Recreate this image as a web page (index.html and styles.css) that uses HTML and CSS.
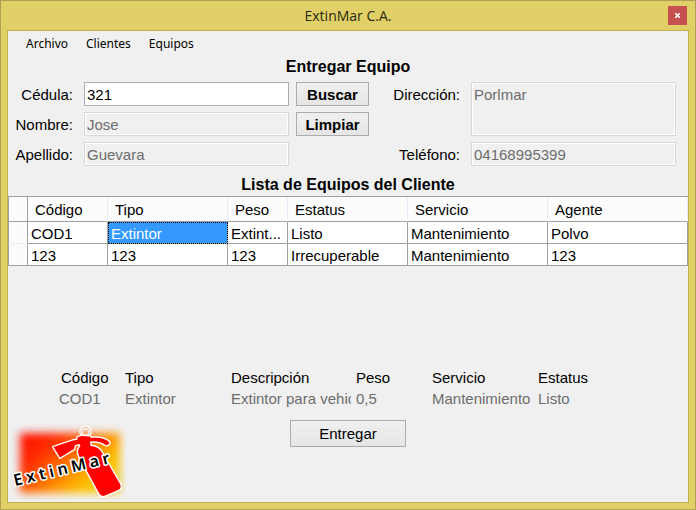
FILE: index.html
```html
<!DOCTYPE html>
<html lang="es">
<head>
<meta charset="utf-8">
<title>ExtinMar C.A.</title>
<link rel="stylesheet" href="styles.css">
</head>
<body>
<div class="window">
  <header class="titlebar">
    <h1 class="title">ExtinMar C.A.</h1>
    <button class="close" type="button" aria-label="Cerrar">
      <svg width="7" height="7" viewBox="0 0 7 7" aria-hidden="true"><path d="M1.2 1.2 5.8 5.8M5.8 1.2 1.2 5.8" stroke="#fff" stroke-width="1.6"/></svg>
    </button>
  </header>
  <main class="client">
    <nav class="menu">
      <a href="#archivo">Archivo</a>
      <a href="#clientes">Clientes</a>
      <a href="#equipos">Equipos</a>
    </nav>
    <h2 class="heading">Entregar Equipo</h2>
    <form class="form">
      <label for="cedula">Cédula:</label>
      <input id="cedula" type="text" value="321">
      <button class="btn strong" type="button">Buscar</button>
      <label for="direccion">Dirección:</label>
      <textarea id="direccion" class="address" disabled>Porlmar</textarea>
      <label for="nombre">Nombre:</label>
      <input id="nombre" type="text" value="Jose" disabled>
      <button class="btn strong" type="button">Limpiar</button>
      <label class="row-start" for="apellido">Apellido:</label>
      <input id="apellido" type="text" value="Guevara" disabled>
      <label class="phone" for="telefono">Teléfono:</label>
      <input id="telefono" type="text" value="04168995399" disabled>
    </form>
    <h2 class="heading list-heading">Lista de Equipos del Cliente</h2>
    <table class="grid">
      <colgroup><col class="c-row"><col class="c-code"><col class="c-type"><col class="c-weight"><col class="c-type"><col class="c-wide"><col class="c-wide"></colgroup>
      <thead>
        <tr><td class="row-head"></td><th>Código</th><th>Tipo</th><th>Peso</th><th>Estatus</th><th>Servicio</th><th>Agente</th></tr>
      </thead>
      <tbody>
        <tr><td class="row-head"></td><td>COD1</td><td class="selected">Extintor</td><td>Extint...</td><td>Listo</td><td>Mantenimiento</td><td>Polvo</td></tr>
        <tr><td class="row-head"></td><td>123</td><td>123</td><td>123</td><td>Irrecuperable</td><td>Mantenimiento</td><td>123</td></tr>
      </tbody>
    </table>
    <section class="bottom">
      <dl class="detail">
        <div><dt class="code">Código</dt><dd>COD1</dd></div>
        <div><dt>Tipo</dt><dd>Extintor</dd></div>
        <div><dt>Descripción</dt><dd>Extintor para vehic</dd></div>
        <div><dt>Peso</dt><dd>0,5</dd></div>
        <div><dt>Servicio</dt><dd>Mantenimiento</dd></div>
        <div><dt>Estatus</dt><dd>Listo</dd></div>
      </dl>
      <div class="actions">
        <svg class="logo" width="116" height="76" viewBox="10 424 116 76" role="img" aria-label="ExtinMar">
          <defs>
            <linearGradient id="fire" gradientUnits="userSpaceOnUse" x1="32" y1="430" x2="94" y2="498">
              <stop offset="0" stop-color="#ff1400"/><stop offset=".25" stop-color="#ff2c00"/><stop offset=".6" stop-color="#ff8a00"/><stop offset=".85" stop-color="#fdc400"/><stop offset="1" stop-color="#f4c818"/>
            </linearGradient>
            <filter id="soft" x="-20%" y="-20%" width="140%" height="140%"><feGaussianBlur stdDeviation="4"/></filter>
          </defs>
          <rect x="20" y="433" width="100" height="60" fill="url(#fire)" filter="url(#soft)"/>
          <circle cx="85.500" cy="432" r="4.500" fill="none" stroke="#fff" stroke-width="3.500"/>
          <circle cx="85.500" cy="432" r="4.500" fill="none" stroke="#eca690" stroke-width="1"/>
          <path d="M53.500 447 73 440.500 77 440 78 437 82 436 90 436.500 91 438C99 437 108 439 109.500 443Q108.500 446 105 444.500C100 441 95 441 90 441.500L90.500 446C96 446 100 449 102 453L120 484Q122 488 118 490L105 495.500Q101 497 99 493L80 458Q76 450 80.500 446L79.500 444 75 445 74 449 60 457.500Z" fill="#f00" stroke="#fff" stroke-width="2.800" stroke-linejoin="round" paint-order="stroke"/>
          <text class="logo-text" transform="translate(15 486) rotate(-13.500)">ExtinMar</text>
        </svg>
        <button class="btn deliver" type="button">Entregar</button>
      </div>
    </section>
  </main>
</div>
</body>
</html>
```
FILE: styles.css
```css
* { box-sizing: border-box; }

body {
  margin: 0;
  font: 15px/20px "Liberation Sans", Arial, sans-serif;
  color: #000;
}

.window {
  display: flex;
  flex-direction: column;
  min-height: 100vh;
  padding: 0 6px 6px;
  border: 1px solid #ada04f;
  background: #e1d067;
}

.titlebar {
  display: grid;
  grid-template-columns: 1fr auto 1fr;
  height: 29px;
}

.title {
  grid-column: 2;
  margin: 0;
  font: 14px/30px "Open Sans", sans-serif;
  color: #2b2810;
}

.close {
  justify-self: end;
  display: grid;
  place-items: center;
  width: 19px;
  height: 19px;
  margin: 5px 2px 0 0;
  padding: 0;
  border: 0;
  background: #c75050;
}

.client {
  flex: 1;
  display: flex;
  flex-direction: column;
  border: 1px solid #c2b04f;
  background: #f0f0f0;
}

.menu {
  display: flex;
  gap: 18px;
  padding: 3px 18px;
  font: 12px/20px "Noto Sans", sans-serif;
}

.menu a {
  color: #000;
  text-decoration: none;
}

.heading {
  margin: 0;
  font-size: 16px;
  line-height: 20px;
  text-align: center;
}

.form {
  display: grid;
  grid-template-columns: 69px 1fr 73px 88px 1fr;
  grid-auto-rows: 24px;
  gap: 6px 7px;
  padding: 5px 12px 0 0;
}

.form label {
  padding-right: 4px;
  line-height: 26px;
  text-align: right;
}

.row-start { grid-column: 1; }
.phone { grid-column: 4; }

input, textarea {
  width: 100%;
  min-width: 0;
  height: 100%;
  margin: 0;
  padding: 1px 2px;
  border: 1px solid #abadb3;
  border-radius: 0;
  background: #fff;
  color: #000;
  font: inherit;
  resize: none;
}

textarea { padding-top: 2px; }

input:disabled, textarea:disabled {
  border-color: #d9d9d9;
  background: #f0f0f0;
  box-shadow: inset 0 0 0 1px #fff;
  color: #6d6d6d;
}

.address { grid-row: span 2; }

.btn {
  padding: 1px 0 0;
  border: 1px solid #acacac;
  background: linear-gradient(#f0f0f0, #e5e5e5);
  color: #000;
  font: inherit;
}

.strong { font-weight: bold; }

.list-heading { margin: 9px 0 1px; }

.grid {
  width: 100%;
  table-layout: fixed;
  border-spacing: 0;
  border-top: 1px solid #a0a0a0;
  background: #fff;
}

.c-row { width: 20px; }
.c-code { width: 80px; }
.c-type { width: 120px; }
.c-weight { width: 60px; }
.c-wide { width: 140px; }

.grid th, .grid td {
  height: 22px;
  padding: 2px 3px 0;
  border: solid #a0a0a0;
  border-width: 0 1px 1px 0;
  line-height: 19px;
  text-align: left;
  font-weight: normal;
  white-space: nowrap;
}

.grid th {
  height: 25px;
  padding: 1px 7px 0;
  border-right-color: #e5effa;
  background: #fcfcfc;
}

.grid .row-head {
  border-left: 1px solid #a0a0a0;
  border-bottom-color: #e5effa;
  background: #fcfcfc;
}

.grid thead .row-head,
.grid tr:last-child .row-head { border-bottom-color: #a0a0a0; }

.grid .selected {
  background: #3399ff;
  color: #fff;
  outline: 1px dotted #000;
  outline-offset: -1px;
}

.bottom { margin-top: auto; }

.detail {
  display: grid;
  grid-template-columns: 66fr 106fr 125fr 76fr 106fr 150fr;
  margin: 0;
  padding-left: 51px;
}

.detail div { min-width: 0; }

.detail dt { line-height: 22px; }
.detail .code { padding-left: 2px; }

.detail dd {
  margin: 0 5px 0 0;
  line-height: 20px;
  color: #6d6d6d;
  white-space: nowrap;
  overflow: hidden;
}

.actions {
  display: grid;
  grid-template-columns: 1fr 116px 1fr;
  align-items: start;
  padding: 11px 0 2px;
}

.logo { margin: 4px 0 0 2px; }

.deliver { height: 27px; }

.logo-text {
  font: 600 16px "Noto Sans", sans-serif;
  letter-spacing: 4px;
  fill: #000;
  stroke: #fff;
  stroke-width: 3px;
  stroke-linejoin: round;
  paint-order: stroke;
}
```
